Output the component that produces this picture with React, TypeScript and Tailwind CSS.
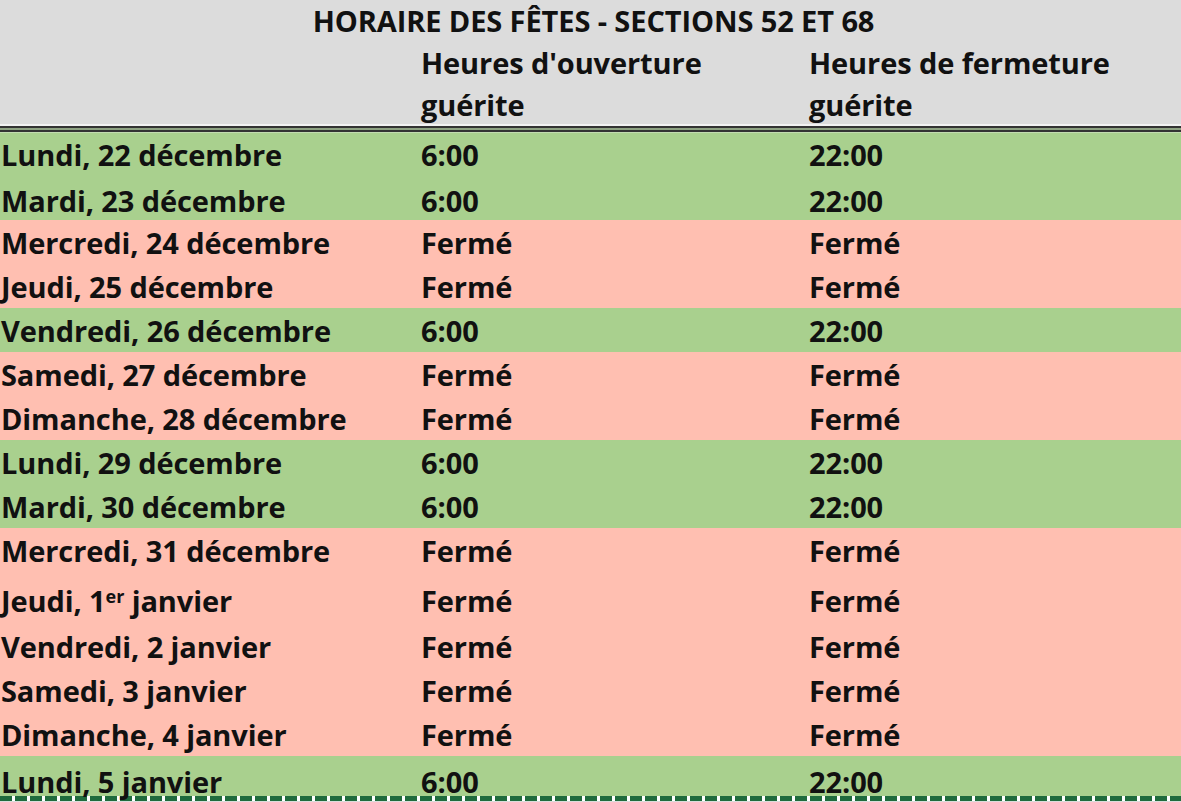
import React from "react";

type Row = { day: React.ReactNode; open: boolean; h?: string };

const rows: Row[] = [
  { day: "Lundi, 22 décembre", open: true },
  { day: "Mardi, 23 décembre", open: true },
  { day: "Mercredi, 24 décembre", open: false },
  { day: "Jeudi, 25 décembre", open: false },
  { day: "Vendredi, 26 décembre", open: true },
  { day: "Samedi, 27 décembre", open: false },
  { day: "Dimanche, 28 décembre", open: false },
  { day: "Lundi, 29 décembre", open: true },
  { day: "Mardi, 30 décembre", open: true },
  { day: "Mercredi, 31 décembre", open: false },
  {
    day: (
      <>
        Jeudi, 1<sup className="text-[18px] relative -top-[9px] align-baseline">er</sup> janvier
      </>
    ),
    open: false,
    h: "tall",
  },
  { day: "Vendredi, 2 janvier", open: false },
  { day: "Samedi, 3 janvier", open: false },
  { day: "Dimanche, 4 janvier", open: false },
  { day: "Lundi, 5 janvier", open: true, h: "last" },
];

export default function App() {
  return (
    <div
      className="w-[1181px] h-[802px] overflow-hidden bg-[#dcdcdc] text-[#111] font-bold text-[29px] tracking-[-0.1px]"
      style={{ fontFamily: "'Open Sans', Lato, sans-serif" }}
    >
      <div className="h-[42px] flex items-center justify-center pl-[6px]">
        HORAIRE DES FÊTES - SECTIONS 52 ET 68
      </div>
      <div className="h-[82px] grid grid-cols-[419px_388px_1fr] leading-[42px]">
        <div />
        <div className="pl-[2px]">
          Heures d'ouverture
          <br />
          guérite
        </div>
        <div className="pl-[2px]">
          Heures de fermeture
          <br />
          guérite
        </div>
      </div>
      <div className="h-[2px] bg-[#f2f2f2]" />
      <div className="h-[2px] bg-[#333]" />
      <div className="h-[2px] bg-[#8ea382]" />
      <div className="h-[2px] bg-[#333]" />
      <div className="h-[1px] bg-[#c3dcb1]" />
      {rows.map((r, i) => (
        <div
          key={i}
          className={`grid grid-cols-[419px_388px_1fr] items-center ${
            r.open ? "bg-[#a9d08e]" : "bg-[#ffbfb1]"
          } ${r.h === "tall" ? "h-[52px] pt-[6px]" : r.h === "last" ? "h-[40px] pt-[4px]" : i === 0 ? "h-[43px]" : i === 1 ? "h-[44px] pt-[3px]" : "h-[44px] pt-[1px]"}`}
        >
          <div className="pl-[1px] whitespace-nowrap">{r.day}</div>
          <div className="pl-[2px]">{r.open ? "6:00" : "Fermé"}</div>
          <div className="pl-[2px]">{r.open ? "22:00" : "Fermé"}</div>
        </div>
      ))}
      <div className="h-[5px] bg-[repeating-linear-gradient(90deg,#1f6b3d_0px,#1f6b3d_12px,#ffffff_12px,#ffffff_15px)]" />
    </div>
  );
}
